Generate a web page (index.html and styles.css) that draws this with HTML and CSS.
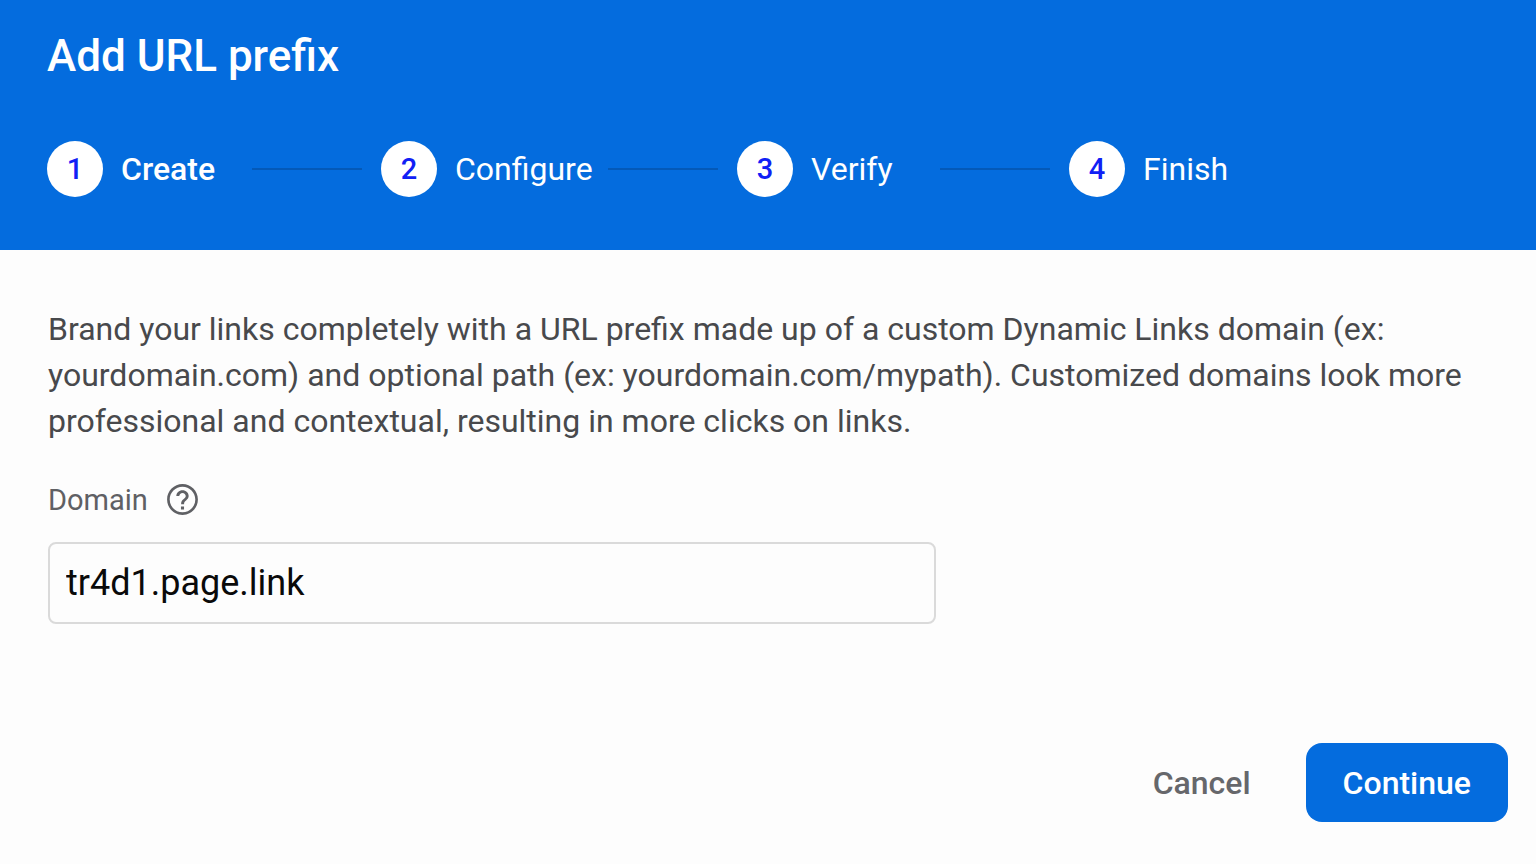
FILE: index.html
```
<!DOCTYPE html>
<html lang="en">
<head>
    <meta charset="UTF-8">
    <meta name="viewport" content="width=device-width, initial-scale=1.0">
    <title>Add URL prefix</title>
    <link rel="stylesheet" href="styles.css">
</head>
<body>
    <header class="header">
        <h1>Add URL prefix</h1>
        <ol class="steps">
            <li class="step active"><span class="number">1</span><span class="label">Create</span></li>
            <li class="step"><span class="number">2</span><span class="label">Configure</span></li>
            <li class="step"><span class="number">3</span><span class="label">Verify</span></li>
            <li class="step"><span class="number">4</span><span class="label">Finish</span></li>
        </ol>
    </header>

    <form class="content">
        <p class="intro">Brand your links completely with a URL prefix made up of a custom Dynamic Links domain (ex: yourdomain.com) and optional path (ex: yourdomain.com/mypath). Customized domains look more professional and contextual, resulting in more clicks on links.</p>

        <div class="field-label">
            <label for="domain">Domain</label>
            <button type="button" class="help" aria-label="Help">
                <svg viewBox="0 0 24 24" width="37" height="37" fill="currentColor">
                    <path d="M11 16.500h2v2h-2v-2zm1-14.500C6.480 2 2 6.480 2 12s4.480 10 10 10 10-4.480 10-10S17.520 2 12 2zm0 18.300c-4.580 0-8.300-3.720-8.300-8.300S7.420 3.700 12 3.700s8.300 3.720 8.300 8.300-3.720 8.300-8.300 8.300zM12 6c-2.210 0-4 1.690-4 3.800h1.900c0-1.100.95-2 2.100-2s2.100.9 2.100 2c0 2-3 1.950-3 5.200h1.900c0-2.250 3-2.700 3-5.200C16 7.690 14.210 6 12 6z"/>
                </svg>
            </button>
        </div>
        <input type="text" id="domain" value="tr4d1.page.link">

        <div class="actions">
            <button type="button" class="cancel">Cancel</button>
            <button type="submit" class="continue">Continue</button>
        </div>
    </form>
</body>
</html>
```
FILE: styles.css
```
* {
    box-sizing: border-box;
}

body {
    font-family: Roboto, sans-serif;
    background-color: #fdfdfd;
    color: #48494c;
    margin: 0;
    min-height: 100vh;
    display: flex;
    flex-direction: column;
}

button, input {
    font-family: inherit;
}

.header {
    background-color: #046cde;
    color: #fff;
    padding: 28px 47px 53px;
}

h1 {
    font-size: 44px;
    font-weight: 500;
    line-height: 56px;
    margin: 0 0 57px;
}

.steps {
    display: grid;
    grid-template-columns: 334px 356px 332px auto;
    list-style: none;
    margin: 0;
    padding: 0;
}

.step {
    display: flex;
    align-items: center;
    font-size: 32px;
}

.step:not(:last-child)::after {
    content: "";
    width: 110px;
    height: 2px;
    margin: 0 19px 0 auto;
    background-color: #0459b8;
}

.active {
    font-weight: 500;
}

.number {
    display: flex;
    align-items: center;
    justify-content: center;
    width: 56px;
    height: 56px;
    margin-right: 18px;
    border-radius: 50%;
    background-color: #fff;
    color: #1020f5;
    font-size: 29px;
    font-weight: 500;
}

.content {
    flex: 1;
    display: flex;
    flex-direction: column;
    padding: 56px 28px 42px 48px;
}

.intro {
    font-size: 32px;
    line-height: 46px;
    margin: 0 0 37px;
}

.field-label {
    display: flex;
    align-items: center;
    gap: 16px;
    margin-bottom: 24px;
    color: #5f6064;
    font-size: 29px;
}

.help {
    display: flex;
    padding: 0;
    border: none;
    background: none;
    color: inherit;
    cursor: pointer;
}

#domain {
    width: 100%;
    max-width: 888px;
    height: 82px;
    padding: 0 16px;
    border: 2px solid #dadada;
    border-radius: 8px;
    background-color: #fdfdfd;
    color: #0a0a0a;
    font-size: 36px;
}

.actions {
    display: flex;
    justify-content: flex-end;
    gap: 18px;
    margin-top: auto;
}

.cancel, .continue {
    height: 79px;
    padding: 0 37px;
    border: none;
    border-radius: 16px;
    font-size: 32px;
    font-weight: 500;
    cursor: pointer;
}

.cancel {
    background: none;
    color: #66676b;
}

.continue {
    background-color: #046cde;
    color: #fff;
}
```
